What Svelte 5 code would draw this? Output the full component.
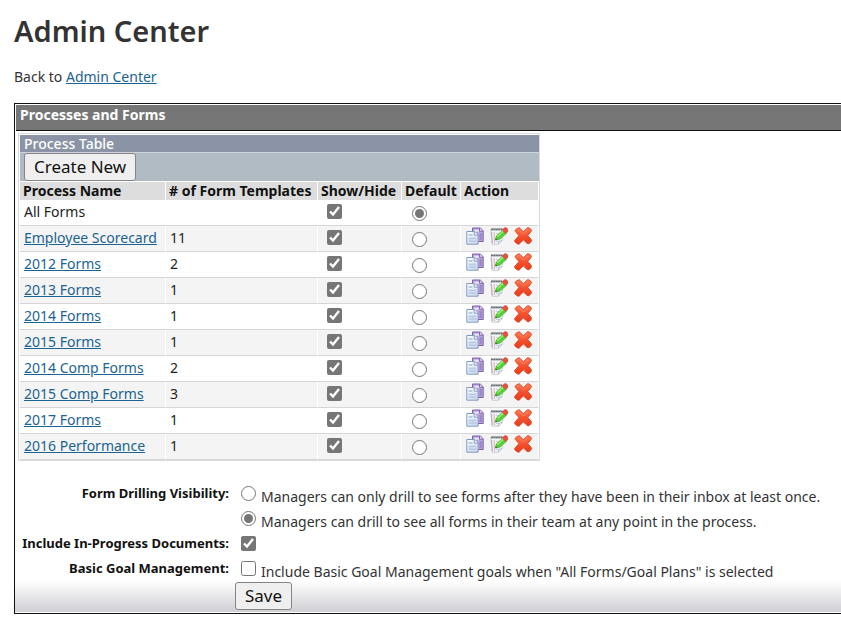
<script lang="ts">
	interface Process {
		name: string;
		templates: number | null;
		shown: boolean;
	}

	let processes = $state<Process[]>([
		{ name: 'All Forms', templates: null, shown: true },
		{ name: 'Employee Scorecard', templates: 11, shown: true },
		{ name: '2012 Forms', templates: 2, shown: true },
		{ name: '2013 Forms', templates: 1, shown: true },
		{ name: '2014 Forms', templates: 1, shown: true },
		{ name: '2015 Forms', templates: 1, shown: true },
		{ name: '2014 Comp Forms', templates: 2, shown: true },
		{ name: '2015 Comp Forms', templates: 3, shown: true },
		{ name: '2017 Forms', templates: 1, shown: true },
		{ name: '2016 Performance', templates: 1, shown: true },
	]);

	let defaultProcess = $state('All Forms');
	let drilling = $state('all');
	let inProgress = $state(true);
	let basicGoals = $state(false);
</script>

<!-- Gradients shared by the row icons -->
<svg class="defs" width="0" height="0" aria-hidden="true">
	<defs>
		<linearGradient id="cross-fill" x1="0" y1="0" x2="0" y2="1">
			<stop offset="0" stop-color="#ff7a50" />
			<stop offset="0.5" stop-color="#f5502f" />
			<stop offset="1" stop-color="#e93a1a" />
		</linearGradient>
		<linearGradient id="page-fill" x1="0" y1="0" x2="1" y2="1">
			<stop offset="0" stop-color="#ffffff" />
			<stop offset="1" stop-color="#cbd9ec" />
		</linearGradient>
	</defs>
</svg>

{#snippet copyIcon()}
	<svg width="18" height="18" viewBox="0 0 18 18" aria-hidden="true">
		<path d="M6.5 1h7.7l3 2.7v10.8H6.5z" fill="#b9a6dc" stroke="#7b60a8" />
		<path d="M8.3 2.7h4.5v2H8.3z" fill="#eee8f8" />
		<path d="M13.6 1v3.2h3.4" fill="#eee8f8" stroke="#7b60a8" />
		<path d="M14.6 6v7" stroke="#9a84c8" stroke-width="2" />
		<path d="M.8 4.5h7.7l3.6 3.3v9.4H.8z" fill="url(#page-fill)" stroke="#7e98c0" />
		<path d="M8.2 4.6v3.5h3.8" fill="#fff" stroke="#7e98c0" />
		<path d="M2.6 7h3.8v2H2.6zM2.6 10.5h7.6v4.8H2.6z" fill="#b9cae3" />
		<path d="M2.6 12.8h7.6" stroke="#d7e2f1" />
	</svg>
{/snippet}

{#snippet editIcon()}
	<svg width="18" height="18" viewBox="0 0 18 18" aria-hidden="true">
		<path d="M.8 2.5h12.4L12 13.8l-3.2 3.4H2z" fill="#f2f4f9" stroke="#c6cad5" />
		<path d="M1 2.4h11.5" stroke="#666b6c" stroke-width="1.8" />
		<path d="M3 .8v2.4M5.5.8v2.4M8 .8v2.4M10.5.8v2.4" stroke="#a7adb5" stroke-width=".8" />
		<path d="M1.5 5l.8 11" stroke="#a9b0bf" />
		<path d="M4.1 5l.4 11" stroke="#efaaa5" />
		<path d="M6 6.5h3M6 14.5h4.5" stroke="#c3d2e9" />
		<path d="M8.6 17l.2-2.6 3.2-.8" fill="#fff" stroke="#a0aaba" stroke-width=".8" />
		<path d="M5.5 13l.9-4.1 6.4-5.7 3.4 3.4-6.6 5.7z" fill="#54d038" stroke="#45b433" stroke-width=".8" />
		<path d="M7.5 9.6l5.8-5.4" stroke="#9fee75" stroke-width="1.3" />
		<path d="M5.2 13.2l.6-2 1.4 1.4z" fill="#31582a" />
		<path d="M12.4 3.2L14 1q1.8-1 3.2.5t.4 3.3l-1.7 1.7z" fill="#e8503c" stroke="#d84332" stroke-width=".6" />
	</svg>
{/snippet}

{#snippet deleteIcon()}
	<svg width="18" height="18" viewBox="0 0 18 18" aria-hidden="true">
		<path
			d="M1.8 2.5L4.2 1Q5.5.4 6.4 1.7L9.4 5l3.3-3.7q1.1-1.1 2.2-.4l2 1.4q1 1 .1 2.1L13.8 8.5l3.3 3.9q1 1.2.1 2.2l-2 1.9q-1.2.8-2.3-.3L9.2 12.8l-3.4 3.8q-1.1 1.1-2.3.3l-2.4-1.7q-1-1.1 0-2.2l3.8-4.4-3.4-4Q.6 3.5 1.8 2.5z"
			fill="url(#cross-fill)"
			stroke="#e04c2c"
		/>
		<path d="M3.2 3.4l1.6-1 4.6 4.8 4.6-4.9" fill="none" stroke="#ff9470" stroke-width=".7" />
	</svg>
{/snippet}

<main class="page">
	<h1>Admin Center</h1>
	<p class="back">Back to <a href="#admin-center">Admin Center</a></p>

	<section class="panel">
		<h2 class="panel__title">Processes and Forms</h2>

		<div class="processes">
			<h3 class="processes__title">Process Table</h3>
			<div class="processes__toolbar">
				<button type="button">Create New</button>
			</div>
			<table>
				<thead>
					<tr>
						<th class="col-name">Process Name</th>
						<th class="col-count"># of Form Templates</th>
						<th class="col-show">Show/Hide</th>
						<th class="col-default">Default</th>
						<th class="col-action">Action</th>
					</tr>
				</thead>
				<tbody>
					{#each processes as process (process.name)}
						<tr>
							<td>
								{#if process.templates === null}
									{process.name}
								{:else}
									<a href="#process">{process.name}</a>
								{/if}
							</td>
							<td>{process.templates ?? ''}</td>
							<td class="cell-check">
								<input type="checkbox" aria-label="Show {process.name}" bind:checked={process.shown} />
							</td>
							<td class="cell-radio">
								<input
									type="radio"
									name="default-process"
									aria-label="Make {process.name} the default"
									value={process.name}
									bind:group={defaultProcess}
								/>
							</td>
							<td class="cell-action">
								{#if process.templates !== null}
									<div class="actions">
										<button type="button" class="icon" aria-label="Copy {process.name}">{@render copyIcon()}</button>
										<button type="button" class="icon" aria-label="Edit {process.name}">{@render editIcon()}</button>
										<button type="button" class="icon" aria-label="Delete {process.name}">{@render deleteIcon()}</button>
									</div>
								{/if}
							</td>
						</tr>
					{/each}
				</tbody>
			</table>
		</div>

		<form onsubmit={(e) => e.preventDefault()}>
			<div class="field" role="radiogroup" aria-labelledby="drilling-label">
				<span class="field__label" id="drilling-label">Form Drilling Visibility:</span>
				<div>
					<label class="option">
						<input type="radio" name="drilling" value="inbox" bind:group={drilling} />
						<span>Managers can only drill to see forms after they have been in their inbox at least once.</span>
					</label>
					<label class="option">
						<input type="radio" name="drilling" value="all" bind:group={drilling} />
						<span>Managers can drill to see all forms in their team at any point in the process.</span>
					</label>
				</div>
			</div>
			<div class="field">
				<label class="field__label" for="in-progress">Include In-Progress Documents:</label>
				<div class="option">
					<input type="checkbox" id="in-progress" bind:checked={inProgress} />
				</div>
			</div>
			<div class="field">
				<label class="field__label" for="basic-goals">Basic Goal Management:</label>
				<label class="option">
					<input type="checkbox" id="basic-goals" bind:checked={basicGoals} />
					<span>Include Basic Goal Management goals when "All Forms/Goal Plans" is selected</span>
				</label>
			</div>
			<div class="footer">
				<button type="submit">Save</button>
			</div>
		</form>
	</section>
</main>

<style>
	:global(body) {
		background: #fff;
	}

	.defs {
		position: absolute;
	}

	.page {
		padding: 14px 0 0 14px;
		font-family: 'Noto Sans', sans-serif;
		font-size: 14px;
		line-height: 18px;
		color: #333;
	}

	h1,
	h2,
	h3,
	p {
		margin: 0;
	}

	h1 {
		font-size: 29px;
		line-height: 34px;
		font-weight: 600;
	}

	.back {
		margin: 20px 0 17px;
	}

	a {
		color: #1b6390;
		text-decoration: underline;
	}

	button {
		height: 28px;
		padding: 0 9px;
		border: 1px solid #858585;
		border-radius: 3px;
		background: #efefef;
		color: #111;
		font-family: inherit;
		font-size: 17px;
		line-height: 24px;
	}

	input {
		flex: none;
		width: 15px;
		height: 15px;
		margin: 0;
		accent-color: #767676;
	}

	.panel {
		border: 1px solid #111;
		border-right: 0;
	}

	.panel__title {
		height: 25px;
		margin: 1px 0 0 1px;
		padding-left: 4px;
		border-bottom: 1px solid #111;
		background: #767676;
		color: #fff;
		font-size: 14px;
		line-height: 20px;
	}

	/* Process table */
	.processes {
		width: 519px;
		margin: 2px 0 0 3px;
		border: 1px solid #d8dcdf;
		padding: 1px 0 0 1px;
	}

	.processes__title {
		padding-left: 4px;
		border-bottom: 1px solid #d0d4dc;
		background: #8b93a6;
		color: #fff;
		font-size: 14px;
		font-weight: 500;
		line-height: 17px;
	}

	.processes__toolbar {
		display: flex;
		padding-left: 4px;
		background: #b1bbc3;
	}

	table {
		width: 100%;
		border-collapse: separate;
		border-spacing: 0;
		table-layout: fixed;
	}

	.col-name {
		width: 146px;
	}
	.col-count {
		width: 152px;
	}
	.col-show {
		width: 84px;
	}
	.col-default {
		width: 59px;
	}

	th,
	td {
		box-sizing: border-box;
		border-right: 1px solid #fff;
		white-space: nowrap;
	}

	th {
		height: 19px;
		padding: 0 0 0 3px;
		border-top: 1px solid #fff;
		background: #ddd;
		background-clip: padding-box;
		color: #111;
		font-size: 14px;
		line-height: 18px;
		text-align: left;
	}

	td {
		height: 26px;
		padding: 0 0 2px 4px;
		border-bottom: 1px solid #d6d6d6;
		color: #222;
		line-height: 22px;
	}

	tbody tr:nth-child(even) td {
		background: #f4f4f4;
		background-clip: padding-box;
	}

	td input {
		display: block;
	}

	.cell-check {
		padding: 0 0 2px 9px;
	}

	.cell-radio {
		padding: 2px 0 0 10px;
	}

	.cell-action {
		padding: 0 0 5px 5px;
	}

	.actions {
		display: flex;
		gap: 6px;
	}

	.icon {
		height: 18px;
		padding: 0;
		border: 0;
		background: none;
		line-height: 0;
	}

	/* Settings */
	form {
		margin-top: 20px;
	}

	.field {
		display: grid;
		grid-template-columns: 214px 1fr;
		column-gap: 12px;
	}

	.field__label {
		color: #111;
		font-size: 13px;
		font-weight: 700;
		line-height: 25px;
		text-align: right;
		white-space: nowrap;
	}

	.option {
		display: flex;
		gap: 5px;
		height: 25px;
		padding-top: 5px;
		box-sizing: border-box;
	}

	.option span {
		line-height: 22px;
		white-space: nowrap;
	}

	.footer {
		padding: 1px 0 2px 220px;
		background: linear-gradient(#fff, #cfcfd4);
		border-bottom: 1px solid #fff;
		line-height: 0;
	}
</style>
